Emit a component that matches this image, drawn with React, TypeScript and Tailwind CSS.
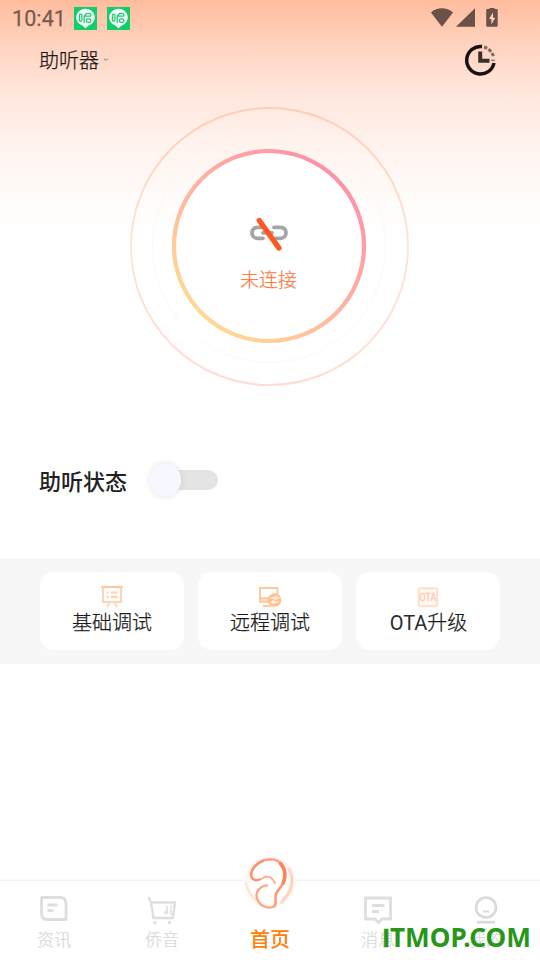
import React from "react";

function AppBadge() {
  return (
    <svg width="23" height="23" viewBox="0 0 23 23" className="block">
      <rect width="23" height="23" fill="#10cf69" />
      <path d="M11.5 1.7a9.2 8.7 0 0 1 3.2 16.9L11.5 21.2 8.3 18.6A9.2 8.7 0 0 1 11.5 1.7Z" fill="#f4fff9" />
      <g fill="none" stroke="#1fc972" strokeWidth="1.3" strokeLinejoin="round" strokeLinecap="round">
        <rect x="5.500" y="7.2" width="2.400" height="7" rx="1.2" />
        <path d="M10.200 15.500V9.500L12.500 6.400h2.500q1.800 0 2 2M11.500 9.200h5" />
        <rect x="12.500" y="11.800" width="4.200" height="3.600" rx="1.300" />
      </g>
    </svg>
  );
}

function StatusBar() {
  return (
    <div className="flex h-9 items-center pl-3 pr-[42px]">
      <span className="mt-px w-[62px] text-[21.5px] leading-9 tracking-[0.1px] text-[#755b50] [font-family:Roboto,sans-serif] [-webkit-text-stroke:0.25px_#755b50]">10:41</span>
      <div className="flex gap-[10px]">
        <AppBadge />
        <AppBadge />
      </div>
      <svg className="ml-auto" width="68" height="20" viewBox="0 0 68 20" fill="#6b5147">
        <path d="M.9 4.5C7.5-1.1 16.4-1.1 23 4.5L12 18.8Z" />
        <path d="M26 18.8H45V.2Z" />
        <path d="M59.5 -.5h5v1.5h2a1.2 1.2 0 0 1 1.2 1.2v15.400a1.2 1.2 0 0 1-1.2 1.2h-9.1a1.2 1.2 0 0 1-1.2-1.2V2.200a1.200 1.200 0 0 1 1.200-1.200h2.100Z" />
        <path d="M63 4.500 59 11h2.400v5.500l3.900-6.800h-2.300Z" fill="#fed1bd" />
      </svg>
    </div>
  );
}

function Header() {
  return (
    <header className="flex h-12 items-center pl-[39px] pr-[43px]">
      <span className="text-[20px] leading-[46px] font-light text-[#1d1816] [-webkit-text-stroke:0.25px_currentColor] [font-family:'Noto_Sans_CJK_SC',sans-serif]">助听器</span>
      <svg className="ml-[4px]" width="6" height="4" viewBox="0 0 6 4" fill="none" stroke="#9b8179">
        <path d="m1 .8 2 1.500L5 .8" />
      </svg>
      <svg className="ml-auto" width="33" height="33" viewBox="0 0 33 33" fill="none" stroke="#17120f">
        <g className="blur-[0.4px]">
          <path d="M18 2.500A13.800 13.800 0 1 0 30 19" strokeWidth="3.500" />
          <path d="M20 3A13.800 13.800 0 0 1 29.800 13.500" strokeWidth="3" strokeDasharray="3.500 1.500" opacity=".55" />
          <path d="M16.200 7.500v9.300h9.300" strokeWidth="4" opacity=".85" />
          <path d="M27 16.300h4" strokeWidth="1.300" opacity=".5" />
        </g>
      </svg>
    </header>
  );
}

function ConnectionDial() {
  return (
    <div className="mx-auto mt-[22px] grid h-[282px] w-[282px] place-items-start">
      <svg className="col-start-1 row-start-1" width="282" height="282" viewBox="0 0 282 282" fill="none">
        <defs>
          <linearGradient id="ring" x1="205" y1="65" x2="75" y2="217" gradientUnits="userSpaceOnUse">
            <stop stopColor="#ff90a6" />
            <stop offset=".5" stopColor="#ffb3a1" />
            <stop offset="1" stopColor="#ffda93" />
          </linearGradient>
          <linearGradient id="halo" x1="140" y1="0" x2="140" y2="280" gradientUnits="userSpaceOnUse">
            <stop stopColor="#ffcdb5" />
            <stop offset=".5" stopColor="#ffe4da" />
            <stop offset="1" stopColor="#ffdcd2" />
          </linearGradient>
        </defs>
        <circle cx="140.500" cy="140.500" r="138.500" stroke="url(#halo)" strokeWidth="2" />
        <circle cx="140" cy="140" r="116.500" stroke="#ffede7" strokeWidth="1" opacity=".5" />
        <circle cx="140" cy="140" r="95" fill="#fff" stroke="url(#ring)" strokeWidth="4.200" />
      </svg>
      <div className="col-start-1 row-start-1 flex h-full w-full flex-col items-center pt-[109px]">
        <svg className="-ml-[3px]" width="40" height="38" viewBox="0 0 40 38" fill="none" strokeLinecap="round">
          <g stroke="#a5a5a5" strokeWidth="3.800">
            <path d="M15 12.300H8.500a5.500 5.500 0 0 0 0 11H14M25 12.300h6.500a5.500 5.500 0 0 1 0 11H27M14 17.800h9" />
          </g>
          <path d="M10.300 5.500 29.900 33" stroke="#ff5722" strokeWidth="5.400" />
        </svg>
        <span className="mt-[12px] -ml-[3px] text-[19px] leading-7 font-light text-[#ff7c46] [-webkit-text-stroke:0.25px_currentColor] [font-family:'Noto_Sans_CJK_SC',sans-serif]">未连接</span>
      </div>
    </div>
  );
}

function HearingStatus() {
  return (
    <div className="mt-[64px] flex h-[56px] items-center pl-[39px]">
      <span className="text-[22px] leading-[56px] font-medium text-[#222] [font-family:'Noto_Sans_CJK_SC',sans-serif]">助听状态</span>
      <div className="ml-[23px] flex items-center">
        <div className="z-10 h-[32px] w-[31px] rounded-full bg-[#f7f7ff] shadow-[0_0_6px_1px_rgba(0,0,0,0.09)]" />
        <div className="-ml-[12px] h-[20px] w-[49px] rounded-full bg-[#e4e4e4] blur-[0.7px]" />
      </div>
    </div>
  );
}

function BoardIcon() {
  return (
    <svg width="24" height="24" viewBox="0 0 24 24" fill="none" stroke="#ffd4b1" strokeWidth="2">
      <path d="M1 3h22" stroke="#ffc89b" strokeWidth="2.200" />
      <path d="M3 3v15h18V3M9.500 18l-2.500 5M14.500 18l2.500 5" />
      <path d="M6.500 8.500h2M10.500 8.500h7M6.500 12.800h2M10.500 12.800h7" strokeWidth="2.200" />
    </svg>
  );
}

function RemoteIcon() {
  return (
    <svg width="24" height="24" viewBox="0 0 24 24" fill="none" stroke="#ffc79a" strokeWidth="1.900">
      <path d="M2.500 14.500h10v3h-10Z" fill="#ffe0c6" stroke="none" />
      <path d="M12 17.700H2V4h17.500V10M2 14.200h10M5 22h8" />
      <circle cx="16.500" cy="16" r="6.800" fill="#ffc28e" stroke="none" />
      <path d="M12.500 14h3.500M19.500 14h2M12.500 18h1.500M17.500 18h3" stroke="#fff" strokeWidth="1.200" />
      <circle cx="17.800" cy="14" r="1.300" stroke="#fff" strokeWidth="1.100" />
      <circle cx="15.500" cy="18" r="1.300" stroke="#fff" strokeWidth="1.100" />
    </svg>
  );
}

function OtaIcon() {
  return (
    <svg width="24" height="24" viewBox="0 0 24 24">
      <rect x="2.800" y="4.300" width="18.400" height="18" rx="1.500" fill="#fff8f3" stroke="#ffdfc6" strokeWidth="2" />
      <text x="12" y="17" textAnchor="middle" fontFamily="Roboto, sans-serif" fontSize="10" textLength="17" lengthAdjust="spacingAndGlyphs" fill="#ffc9a3" stroke="#ffc9a3" strokeWidth=".3">OTA</text>
    </svg>
  );
}

function ToolCard({ icon, children }: { icon: React.ReactNode; children: React.ReactNode }) {
  return (
    <div className="flex h-[78px] flex-1 flex-col items-center rounded-[14px] bg-white pt-[12px]">
      {icon}
      <span className="text-[20px] leading-7 font-light text-[#1a1a1a] [-webkit-text-stroke:0.25px_currentColor] [font-family:'Noto_Sans_CJK_SC',sans-serif]">{children}</span>
    </div>
  );
}

function NewsIcon() {
  return (
    <svg className="blur-[0.7px]" width="32" height="32" viewBox="0 0 32 32" fill="none" stroke="#dedede" strokeWidth="2.800">
      <path d="M4 4.500h18q6 0 6 6.500V26.500H9q-5.500 0-5.500-5.500V5.500Z" />
      <path d="M9.500 12h10M9.500 17.500h6" />
    </svg>
  );
}

function CartIcon() {
  return (
    <svg className="blur-[0.7px]" width="32" height="32" viewBox="0 0 32 32" fill="none" stroke="#dedede" strokeWidth="2.400">
      <path d="M2.500 4 5 9.500h24L26.800 25H7.500L5 9.500" />
      <path d="M21 12.500v6.500M25 12v10" strokeWidth="1.400" />
      <ellipse cx="20" cy="19.500" rx="2.300" ry="1.700" fill="#e2e2e2" stroke="none" />
      <circle cx="9" cy="29.500" r="1.700" fill="#e0e0e0" stroke="none" />
      <circle cx="23.500" cy="29.500" r="1.700" fill="#e0e0e0" stroke="none" />
    </svg>
  );
}

function MessageIcon() {
  return (
    <svg className="blur-[0.7px]" width="32" height="32" viewBox="0 0 32 32" fill="none" stroke="#dedede" strokeWidth="2.800">
      <path d="M3.500 5h25v21H20L16.500 29.500 13 26H3.500Z" />
      <path d="M10 12.500h12.500M10 18.500h7" />
    </svg>
  );
}

function ProfileIcon() {
  return (
    <svg className="blur-[0.7px]" width="32" height="32" viewBox="0 0 32 32" fill="none" stroke="#dadada" strokeWidth="2.700">
      <circle cx="16" cy="14.500" r="10" />
      <path d="M13 18.500h6" strokeWidth="2" />
      <path d="M7 29.200h18" />
    </svg>
  );
}

function EarIcon() {
  return (
    <svg width="54" height="58" viewBox="0 0 54 58" fill="none" strokeLinecap="round" strokeLinejoin="round">
      <defs>
        <radialGradient id="earGlow">
          <stop offset=".75" stopColor="#fff" />
          <stop offset=".91" stopColor="#fff4ed" />
          <stop offset="1" stopColor="#fff" />
        </radialGradient>
      </defs>
      <circle cx="27" cy="30" r="26.500" fill="url(#earGlow)" />
      <g className="blur-[0.6px]">
        <path d="M46 17c5 9 4 22-7.500 33" stroke="#ffdccd" strokeWidth="3.500" />
        <path d="M48.500 24c2 10-2 18-8 23" stroke="#ffd0bc" strokeWidth="1.600" />
        <path d="M3 31c1.500 8 6 15 13 19" stroke="#ffe2d5" strokeWidth="1.800" />
        <path d="M32 31C30 27 27 24.500 23.500 24.500 20.500 24.700 19.500 27 16.500 27.500" stroke="#ffae8f" strokeWidth="2" />
        <path d="M16.500 27.500C13 29 8.200 28 8 23 8 17.500 13.500 11 20.500 8.500" stroke="#ff8f69" strokeWidth="2.400" />
        <path d="M20.500 8.500C28 6.200 35 7.500 39 12.500" stroke="#ff9b78" strokeWidth="2.200" />
        <path d="M37.500 11.500c5 5.500 5.500 13 2.500 20" stroke="#ff8155" strokeWidth="3.600" />
        <path d="M40 31.500c-2 4-5.500 6.500-7 10.500-1.500 4 1 9-1.500 12" stroke="#ff9872" strokeWidth="2.500" />
        <path d="M31 54.500c-4 2-11 1-14-3-3.500-4-4.500-7.500-2.700-11.500 1.500-3.500 4.200-6.200 9.700-6.700" stroke="#ffa384" strokeWidth="2.200" />
      </g>
    </svg>
  );
}

function Tab({ icon, label }: { icon: React.ReactNode; label: string }) {
  return (
    <div className="flex flex-1 flex-col items-center pt-[12px]">
      {icon}
      <span className="mt-px text-[17px] leading-[25px] font-light text-[#d8d8d8] [-webkit-text-stroke:0.2px_currentColor] [font-family:'Noto_Sans_CJK_SC',sans-serif]">{label}</span>
    </div>
  );
}

function BottomNav() {
  return (
    <nav className="relative mt-auto flex h-20 border-t border-[#f2f2f2] bg-white shadow-[0_-1px_1px_#fafafa]">
      <Tab icon={<NewsIcon />} label="资讯" />
      <Tab icon={<CartIcon />} label="侨音" />
      <div className="-mt-[29px] flex flex-1 flex-col items-center">
        <EarIcon />
        <span className="mt-[15px] text-[20px] leading-7 font-medium text-[#ff8008] [font-family:'Noto_Sans_CJK_SC',sans-serif]">首页</span>
      </div>
      <Tab icon={<MessageIcon />} label="消息" />
      <Tab icon={<ProfileIcon />} label="我的" />
      <div className="absolute top-[38px] right-[9px] text-[26.2px] leading-9 font-bold whitespace-nowrap text-[#27961b] [font-family:'Noto_Sans','Open_Sans',sans-serif]">
        <span className="[-webkit-text-stroke:0.5px_currentColor] [font-family:'Liberation_Sans',sans-serif]">I</span>TMOP.COM
      </div>
    </nav>
  );
}

export default function App() {
  return (
    <main className="flex h-[960px] w-[540px] flex-col overflow-hidden bg-white bg-[linear-gradient(to_bottom,#ffbc9d_0px,#ffd5c3_50px,#ffe7dd_96px,#fff3ee_145px,#fffbf9_195px,#fff_240px)]">
      <StatusBar />
      <Header />
      <ConnectionDial />
      <HearingStatus />
      <section className="mt-[50px] flex h-[106px] gap-[14px] bg-[#f7f7f7] px-10 py-[14px]">
        <ToolCard icon={<BoardIcon />}>基础调试</ToolCard>
        <ToolCard icon={<RemoteIcon />}>远程调试</ToolCard>
        <ToolCard icon={<OtaIcon />}>
          <span className="ml-px font-normal text-[#2a2a2a] [-webkit-text-stroke:0] [font-family:Roboto,sans-serif]">OTA</span>升级
        </ToolCard>
      </section>
      <BottomNav />
    </main>
  );
}
